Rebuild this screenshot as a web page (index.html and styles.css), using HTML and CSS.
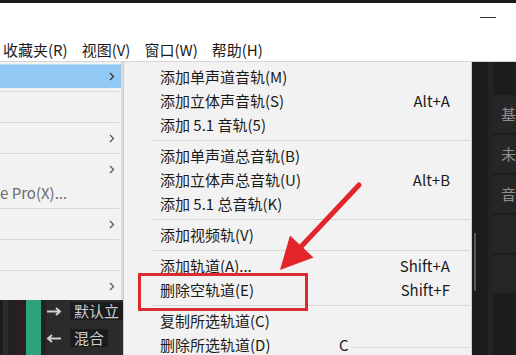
FILE: index.html
```html
<!DOCTYPE html>
<html>
<head>
    <title>轨道菜单</title>
    <link rel="stylesheet" href="styles.css">
</head>
<body>
    <div class="window">
        <header class="titlebar">
            <span class="min-btn"></span>
        </header>
        <nav class="menubar">
            <span>收藏夹(R)</span>
            <span>视图(V)</span>
            <span>窗口(W)</span>
            <span>帮助(H)</span>
        </nav>

        <div class="workspace">
            <div class="left-col">
                <!-- parent menu, cut off on the left -->
                <ul class="menu parent-menu">
                    <li class="item active"><span></span><svg class="chev" viewBox="0 0 6 9"><path d="M1 1 L4.5 4.5 L1 8"/></svg></li>
                    <li class="sep"></li>
                    <li class="item"></li>
                    <li class="sep"></li>
                    <li class="item"><span></span><svg class="chev" viewBox="0 0 6 9"><path d="M1 1 L4.5 4.5 L1 8"/></svg></li>
                    <li class="sep"></li>
                    <li class="item"><span></span><svg class="chev" viewBox="0 0 6 9"><path d="M1 1 L4.5 4.5 L1 8"/></svg></li>
                    <li class="item muted"><span>e Pro(X)...</span></li>
                    <li class="sep"></li>
                    <li class="item"><span></span><svg class="chev" viewBox="0 0 6 9"><path d="M1 1 L4.5 4.5 L1 8"/></svg></li>
                    <li class="sep"></li>
                    <li class="item"></li>
                    <li class="sep"></li>
                    <li class="item"><span></span><svg class="chev" viewBox="0 0 6 9"><path d="M1 1 L4.5 4.5 L1 8"/></svg></li>
                </ul>

                <div class="tracks">
                    <div class="stripe s1"></div>
                    <div class="stripe s2"></div>
                    <div class="stripe s3"></div>
                    <div class="stripe s4"></div>
                    <div class="stripe green"></div>
                    <div class="stripe s5"></div>
                    <div class="track-heads">
                        <div class="track-row">
                            <svg class="io-arrow" viewBox="0 0 16 9"><path d="M1 4.5 H14 M10 1 L14 4.5 L10 8"/></svg>
                            <span class="track-label">默认立</span>
                        </div>
                        <div class="track-row second">
                            <svg class="io-arrow" viewBox="0 0 16 9"><path d="M15 4.5 H2 M6 1 L2 4.5 L6 8"/></svg>
                            <span class="track-label">混合</span>
                        </div>
                    </div>
                </div>
            </div>

            <ul class="menu submenu">
                <li class="item"><span>添加单声道音轨(M)</span></li>
                <li class="item"><span>添加立体声音轨(S)</span><span class="key">Alt+A</span></li>
                <li class="item"><span>添加 5.1 音轨(5)</span></li>
                <li class="sep"></li>
                <li class="item"><span>添加单声道总音轨(B)</span></li>
                <li class="item"><span>添加立体声总音轨(U)</span><span class="key">Alt+B</span></li>
                <li class="item"><span>添加 5.1 总音轨(K)</span></li>
                <li class="sep"></li>
                <li class="item"><span>添加视频轨(V)</span></li>
                <li class="sep"></li>
                <li class="item"><span>添加轨道(A)...</span><span class="key">Shift+A</span></li>
                <li class="item"><span>删除空轨道(E)</span><span class="key">Shift+F</span></li>
                <li class="sep"></li>
                <li class="item"><span>复制所选轨道(C)</span></li>
                <li class="item"><span>删除所选轨道(D)</span><span class="key cut-key">C<i class="key-rule"></i></span></li>
            </ul>

            <div class="panel">
                <div class="scroll-col"><div class="scroll-thumb"></div></div>
                <div class="gutter"></div>
                <div class="cards">
                    <div class="card">基</div>
                    <div class="card">未</div>
                    <div class="card">音</div>
                    <div class="card"></div>
                    <div class="card"></div>
                </div>
            </div>
        </div>

        <!-- red annotation over the screenshot -->
        <svg class="annot" viewBox="0 0 516 355">
            <rect x="139.5" y="274.5" width="167" height="35" fill="none" stroke="#dd2a2e" stroke-width="3"/>
            <line x1="359" y1="185" x2="297" y2="251" stroke="#e2262b" stroke-width="5" stroke-linecap="round"/>
            <polygon points="280,270 290,235.5 313.5,257.5" fill="#e2262b"/>
        </svg>
    </div>
</body>
</html>
```

FILE: styles.css
```css
* {
    box-sizing: border-box;
}

body {
    margin: 0;
    width: 516px;
    height: 355px;
    overflow: hidden;
    background: #1e1e1e;
    font-family: "Noto Sans CJK SC", "Noto Sans", sans-serif;
    font-size: 15px;
    color: #1b1b1b;
}

.window {
    position: relative;
    width: 516px;
    height: 355px;
    display: flex;
    flex-direction: column;
    overflow: hidden;
}

.titlebar {
    height: 40px;
    background: #fff;
    border-top: 3px solid #1b1b1b;
    position: relative;
}

.min-btn {
    position: absolute;
    right: 20px;
    top: 14px;
    width: 16px;
    height: 1px;
    background: #333;
}

.menubar {
    height: 22px;
    background: #fff;
    border-bottom: 1px solid #d6d6d6;
    display: flex;
    gap: 14px;
    padding-left: 3px;
    line-height: 20px;
    white-space: nowrap;
}

.workspace {
    flex: 1;
    display: flex;
    min-height: 0;
}

/* menus */
.menu {
    list-style: none;
    margin: 0;
    background: #f2f2f2;
}

.item {
    height: 24px;
    line-height: 24px;
    display: flex;
    justify-content: space-between;
    align-items: center;
    white-space: nowrap;
}

.sep {
    height: 7px;
    position: relative;
}

.sep::after {
    content: "";
    position: absolute;
    left: 0;
    right: 0;
    top: 3px;
    height: 1px;
    background: #d6d6d6;
}

.left-col {
    width: 123px;
    display: flex;
    flex-direction: column;
}

.parent-menu {
    padding: 2px 0 2px 0;
    border-right: 2px solid #dcdcdc;
}

.parent-menu .item {
    padding-right: 6px;
}

.parent-menu .sep::after {
    right: 2px;
}

.parent-menu .active {
    background: #91c8f4;
    border-top: 1px solid #b6dbf7;
}

.chev {
    width: 6px;
    height: 9px;
    fill: none;
    stroke: #5a5a5a;
    stroke-width: 1.3;
}

.active .chev {
    stroke: #333;
}

.muted {
    color: #6b6b6b;
}

.submenu {
    width: 351px;
    padding: 3px 0 0 0;
    border-left: 1px solid #cbcbcb;
    border-right: 1px solid #d0d0d0;
}

.submenu .item {
    padding: 0 21px 0 36px;
}

.submenu .sep::after {
    left: 29px;
    right: 1px;
}

.key {
    color: #1b1b1b;
}

.cut-key {
    display: flex;
    align-items: center;
    margin-right: -19px;
    width: 130px;
}

.key-rule {
    flex: 1;
    height: 1px;
    margin-left: 2px;
    margin-top: 4px;
    background: #d6d6d6;
}

/* dark track area under the menu */
.tracks {
    flex: 1;
    display: flex;
    background: #2b2b2b;
}

.stripe {
    height: 100%;
}

.s1 { width: 3px; background: #1c1c1c; }
.s2 { width: 5px; background: #2a2a2a; }
.s3 { width: 7px; background: #222; }
.s4 { width: 12px; background: #2b1f23; }
.green { width: 16px; background: #2fa27b; }
.s5 { width: 5px; background: #232323; }

.track-heads {
    flex: 1;
    padding-top: 2px;
}

.track-row {
    display: flex;
    align-items: center;
    gap: 8px;
    height: 18px;
}

.track-row.second {
    margin-top: 9px;
}

.io-arrow {
    width: 16px;
    height: 9px;
    fill: none;
    stroke: #cfcfcf;
    stroke-width: 2;
}

.track-label {
    background: #1c1c1c;
    color: #cdcdcd;
    line-height: 18px;
    padding: 0 4px;
    white-space: nowrap;
}

/* right dark panel */
.panel {
    flex: 1;
    display: flex;
    background: #1c1c1c;
}

.scroll-col {
    width: 16px;
    padding-left: 2px;
    padding-top: 171px;
}

.scroll-thumb {
    width: 2px;
    height: 58px;
    background: #565656;
}

.gutter {
    width: 5px;
    background: #232323;
}

.cards {
    flex: 1;
    padding-top: 33px;
    display: flex;
    flex-direction: column;
    gap: 2px;
}

.card {
    height: 38px;
    background: #262626;
    color: #8e8e8e;
    padding-left: 8px;
    line-height: 38px;
    white-space: nowrap;
}

.annot {
    position: absolute;
    left: 0;
    top: 0;
    width: 516px;
    height: 355px;
    pointer-events: none;
}
```
